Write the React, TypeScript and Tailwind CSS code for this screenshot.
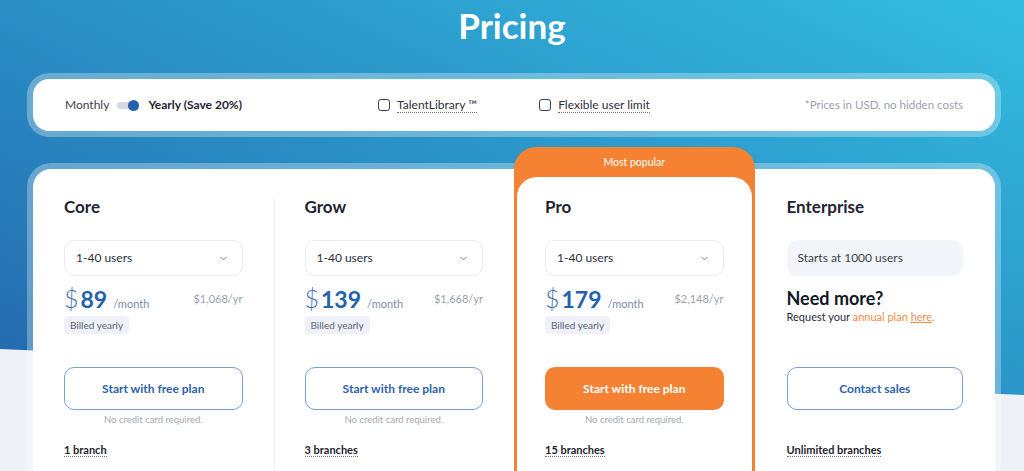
import { ChevronDown } from "lucide-react";

interface Plan {
  name: string;
  price: string;
  yearly: string;
  branches: string;
  popular?: boolean;
}

const plans: Plan[] = [
  { name: "Core", price: "89", yearly: "$1,068/yr", branches: "1 branch" },
  { name: "Grow", price: "139", yearly: "$1,668/yr", branches: "3 branches" },
  { name: "Pro", price: "179", yearly: "$2,148/yr", branches: "15 branches", popular: true },
];

function Checkbox({ label }: { label: string }) {
  return (
    <label className="flex items-center gap-[7px]">
      <span className="h-[12px] w-[12px] rounded-[3px] border-[1.5px] border-[#3a3f4a]" />
      <span className="border-b border-dotted border-[#6b7280] leading-[15px] text-[#2b3040]">{label}</span>
    </label>
  );
}

function PlanBody({ plan }: { plan: Plan }) {
  return (
    <>
      <h3 className="text-[17px] font-bold leading-[24px] text-[#1f2430]">{plan.name}</h3>
      <div className="mt-[21px] flex h-[36px] items-center justify-between rounded-[10px] border border-[#e6ebf3] bg-white pl-[11px] pr-[13px] text-[12px] text-[#2b3040]">
        <span>1-40 users</span>
        <ChevronDown size={11} strokeWidth={2} className="text-[#6b7280]" />
      </div>
      <div className="mt-[10px] flex h-[26px] items-center justify-between">
        <div className="flex items-baseline">
          <span className="text-[25px] font-light leading-[26px] text-[#3a70bd]">$</span>
          <span className="ml-[2px] text-[23px] font-bold leading-[26px] text-[#2461ae]">{plan.price}</span>
          <span className="ml-[6px] text-[11px] text-[#7f8ca6]">/month</span>
        </div>
        <span className="text-[11px] text-[#9aa1ad]">{plan.yearly}</span>
      </div>
      <span className="mt-[4px] flex h-[18px] w-fit items-center rounded-[4px] bg-[#eef2f8] px-[6px] text-[10px] text-[#5a6272]">
        Billed yearly
      </span>
      <button
        className={
          plan.popular
            ? "mt-[33px] h-[43px] w-full rounded-[10px] bg-[#f58233] text-[12px] font-bold text-white"
            : "mt-[33px] h-[43px] w-full rounded-[10px] border border-[#7aa0d6] bg-white text-[12px] font-bold text-[#2c62ad]"
        }
      >
        Start with free plan
      </button>
      <p className="mt-[4px] text-center text-[9.5px] leading-[12px] text-[#a3a8b0]">No credit card required.</p>
      <span className="mt-[17px] w-fit border-b border-dotted border-[#6b7280] text-[11px] font-bold leading-[13px] text-[#1f2430]">
        {plan.branches}
      </span>
    </>
  );
}

export default function App() {
  return (
    <div className="relative h-[471px] overflow-hidden bg-linear-to-tr from-[#2360a8] to-[#33bde0] font-['Lato',sans-serif]">
      <div className="absolute inset-0 bg-[#eef2f7] [clip-path:polygon(0_349px,100%_395px,100%_100%,0_100%)]" />
      <div className="relative">
        <h1 className="pt-[5px] text-center text-[35px] font-bold leading-[40px] text-white">Pricing</h1>

        <div className="ml-[27px] mr-[23px] mt-[28px] rounded-[22px] bg-white/30 p-[6px]">
          <div className="grid h-[52px] grid-cols-3 items-center rounded-[16px] bg-white px-[32px] text-[12px]">
            <div className="flex items-center">
              <span className="text-[#3a3f4a]">Monthly</span>
              <span className="relative ml-[8px] h-[7px] w-[22px] rounded-full bg-[#d6d9df]">
                <span className="absolute right-0 top-[-2px] h-[11px] w-[11px] rounded-full bg-[#2461ae]" />
              </span>
              <span className="ml-[9px] font-bold text-[#1f2430]">Yearly (Save 20%)</span>
            </div>
            <div className="flex items-center justify-center gap-[62px]">
              <Checkbox label="TalentLibrary ™" />
              <Checkbox label="Flexible user limit" />
            </div>
            <div className="text-right text-[11.5px] text-[#9aa1ad]">*Prices in USD, no hidden costs</div>
          </div>
        </div>

        <div className="ml-[27px] mr-[23px] mt-[26px] rounded-t-[24px] bg-white/30 px-[6px] pt-[6px]">
          <div className="grid h-[320px] grid-cols-4 rounded-t-[18px] bg-white">
            {plans.map((plan, i) =>
              plan.popular ? (
                <div key={plan.name} className="-mt-[22px] flex flex-col rounded-t-[22px] bg-[#f58233]">
                  <div className="text-center text-[10.5px] leading-[30px] text-white">Most popular</div>
                  <div className="mx-[3px] flex flex-1 flex-col rounded-t-[20px] bg-white px-[28px] pt-[18px]">
                    <PlanBody plan={plan} />
                  </div>
                </div>
              ) : (
                <div
                  key={plan.name}
                  className={
                    i === 1
                      ? "relative flex flex-col px-[31px] pt-[26px] before:absolute before:bottom-0 before:left-0 before:top-[29px] before:w-px before:bg-[#edf0f5]"
                      : "flex flex-col px-[31px] pt-[26px]"
                  }
                >
                  <PlanBody plan={plan} />
                </div>
              )
            )}

            <div className="flex flex-col px-[32px] pt-[26px]">
              <h3 className="text-[17px] font-bold leading-[24px] text-[#1f2430]">Enterprise</h3>
              <div className="mt-[21px] flex h-[36px] items-center rounded-[10px] bg-[#f2f5fa] px-[11px] text-[12px] text-[#3a3f4a]">
                Starts at 1000 users
              </div>
              <div className="mt-[10px] h-[48px]">
                <p className="text-[18px] font-bold leading-[24px] text-[#111827]">Need more?</p>
                <p className="text-[11px] leading-[14px] text-[#2b3040]">
                  Request your <span className="text-[#f58a45]">annual plan</span>{" "}
                  <span className="text-[#f58a45] underline">here</span>
                  <span className="text-[#f58a45]">.</span>
                </p>
              </div>
              <button className="mt-[33px] h-[43px] w-full rounded-[10px] border border-[#7aa0d6] bg-white text-[12px] font-bold text-[#2c62ad]">
                Contact sales
              </button>
              <p className="mt-[4px] h-[12px]" />
              <span className="mt-[17px] w-fit border-b border-dotted border-[#6b7280] text-[11px] font-bold leading-[13px] text-[#1f2430]">
                Unlimited branches
              </span>
            </div>
          </div>
        </div>
      </div>
    </div>
  );
}
